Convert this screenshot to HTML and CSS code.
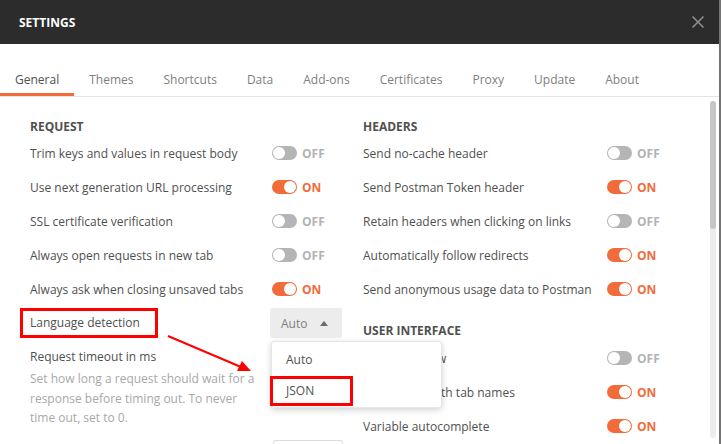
FILE: index.html
```html
<!DOCTYPE html>
<html lang="en">
<head>
<meta charset="utf-8">
<title>Settings</title>
<link rel="stylesheet" href="styles.css">
</head>
<body>
<div class="window">
  <div class="dialog">
    <header class="titlebar">
      <h1 class="title">SETTINGS</h1>
      <button class="close" aria-label="Close">
        <svg width="14" height="14" viewBox="0 0 14 14"><path d="M1.5 1.5 L12.5 12.5 M12.5 1.5 L1.5 12.5" stroke="#8e8e8e" stroke-width="1.6" fill="none"/></svg>
      </button>
    </header>
    <nav class="tabs">
      <span class="tab active">General</span>
      <span class="tab">Themes</span>
      <span class="tab">Shortcuts</span>
      <span class="tab">Data</span>
      <span class="tab">Add-ons</span>
      <span class="tab">Certificates</span>
      <span class="tab">Proxy</span>
      <span class="tab">Update</span>
      <span class="tab">About</span>
    </nav>
    <div class="body">
      <div class="content">
        <section class="col col-left">
          <h2 class="heading">REQUEST</h2>
          <div class="row"><span class="label">Trim keys and values in request body</span><span class="switch"><span class="track"><span class="knob"></span></span><span class="state">OFF</span></span></div>
          <div class="row"><span class="label">Use next generation URL processing</span><span class="switch on"><span class="track"><span class="knob"></span></span><span class="state">ON</span></span></div>
          <div class="row"><span class="label">SSL certificate verification</span><span class="switch"><span class="track"><span class="knob"></span></span><span class="state">OFF</span></span></div>
          <div class="row"><span class="label">Always open requests in new tab</span><span class="switch"><span class="track"><span class="knob"></span></span><span class="state">OFF</span></span></div>
          <div class="row"><span class="label">Always ask when closing unsaved tabs</span><span class="switch on"><span class="track"><span class="knob"></span></span><span class="state">ON</span></span></div>
          <div class="row">
            <span class="label"><span class="mark-box">Language detection</span></span>
            <div class="select-wrap">
              <div class="select"><span>Auto</span><span class="caret"></span></div>
              <ul class="menu">
                <li class="menu-item">Auto</li>
                <li class="menu-item"><span class="mark-item">JSON</span></li>
              </ul>
            </div>
          </div>
          <div class="timeout">
            <div class="timeout-title">Request timeout in ms</div>
            <p class="desc">Set how long a request should wait for a response before timing out. To never time out, set to 0.</p>
            <div class="input-row"><span class="input"></span></div>
          </div>
        </section>
        <section class="col col-right">
          <h2 class="heading">HEADERS</h2>
          <div class="row"><span class="label">Send no-cache header</span><span class="switch"><span class="track"><span class="knob"></span></span><span class="state">OFF</span></span></div>
          <div class="row"><span class="label">Send Postman Token header</span><span class="switch on"><span class="track"><span class="knob"></span></span><span class="state">ON</span></span></div>
          <div class="row"><span class="label">Retain headers when clicking on links</span><span class="switch"><span class="track"><span class="knob"></span></span><span class="state">OFF</span></span></div>
          <div class="row"><span class="label">Automatically follow redirects</span><span class="switch on"><span class="track"><span class="knob"></span></span><span class="state">ON</span></span></div>
          <div class="row"><span class="label">Send anonymous usage data to Postman</span><span class="switch on"><span class="track"><span class="knob"></span></span><span class="state">ON</span></span></div>
          <h2 class="heading heading-spaced">USER INTERFACE</h2>
          <div class="row"><span class="label">Two-pane view</span><span class="switch"><span class="track"><span class="knob"></span></span><span class="state">OFF</span></span></div>
          <div class="row"><span class="label">Show icons with tab names</span><span class="switch on"><span class="track"><span class="knob"></span></span><span class="state">ON</span></span></div>
          <div class="row"><span class="label">Variable autocomplete</span><span class="switch on"><span class="track"><span class="knob"></span></span><span class="state">ON</span></span></div>
        </section>
      </div>
      <div class="scrollbar"><div class="thumb"></div></div>
    </div>
  </div>
  <div class="edge"></div>
  <svg class="arrow" width="721" height="444" viewBox="0 0 721 444">
    <line x1="168" y1="336" x2="241" y2="367" stroke="#ff0000" stroke-width="2"/>
    <polygon points="251,371 237,371 242,361" fill="#ff0000"/>
  </svg>
</div>
</body>
</html>
```
FILE: styles.css
```css
* { box-sizing: border-box; }
html, body { margin: 0; padding: 0; }
body {
  font-family: "Open Sans", "Liberation Sans", sans-serif;
  font-size: 12px;
  color: #505050;
  background: #fff;
}
.window {
  position: relative;
  display: flex;
  width: 721px;
  height: 444px;
  overflow: hidden;
}
.dialog {
  flex: 1;
  display: flex;
  flex-direction: column;
  min-width: 0;
}
.edge {
  width: 2px;
  background: #747474;
}
.titlebar {
  height: 44px;
  background: #2c2c2c;
  display: flex;
  align-items: center;
  justify-content: space-between;
  padding: 0 14px 0 19px;
  flex-shrink: 0;
}
.title {
  margin: 0;
  font-size: 12px;
  font-weight: 700;
  color: #ffffff;
  letter-spacing: 0;
}
.close {
  border: 0;
  background: none;
  padding: 0;
  width: 14px;
  height: 14px;
  display: flex;
}
.tabs {
  height: 53px;
  display: flex;
  align-items: flex-end;
  border-bottom: 1px solid #e4e4e4;
  flex-shrink: 0;
}
.tab {
  padding: 6px 15px 0;
  height: 31px;
  line-height: 18px;
  color: #808080;
  border-bottom: 3px solid transparent;
  white-space: nowrap;
}
.tab.active {
  color: #505050;
  border-bottom-color: #f26b3a;
}
.body {
  flex: 1;
  display: flex;
  min-height: 0;
}
.content {
  flex: 1;
  display: grid;
  grid-template-columns: 313px 1fr;
  column-gap: 20px;
  padding: 20px 0 0 30px;
}
.col { min-width: 0; }
.col-left { --label-w: 242px; }
.col-right { --label-w: 244px; }
.heading {
  margin: 0;
  font-size: 12px;
  font-weight: 700;
  line-height: 20px;
  color: #505050;
}
.heading-spaced { margin-top: 15px; }
.row {
  display: grid;
  grid-template-columns: var(--label-w) auto;
  align-items: center;
  height: 34px;
}
.row:first-of-type { margin-top: -1px; }
.label {
  white-space: nowrap;
  color: #505050;
}
.switch {
  display: flex;
  align-items: center;
  gap: 5px;
}
.track {
  width: 25px;
  height: 14px;
  border-radius: 7px;
  background: #b5b5b5;
  padding: 1px;
  display: flex;
  justify-content: flex-start;
}
.knob {
  width: 12px;
  height: 12px;
  border-radius: 50%;
  background: #ffffff;
}
.state {
  font-weight: 700;
  color: #b3b3b3;
}
.switch.on .track {
  background: #f26b3a;
  justify-content: flex-end;
}
.switch.on .state { color: #f26b3a; }
.mark-box {
  display: inline-block;
  width: 138px;
  height: 30px;
  line-height: 24px;
  margin-left: -10px;
  padding-left: 7px;
  border: 3px solid #ff0000;
}
.select-wrap {
  position: relative;
  margin-left: -2px;
}
.select {
  width: 72px;
  height: 30px;
  background: #ececec;
  border-radius: 2px;
  display: flex;
  align-items: center;
  justify-content: space-between;
  padding: 0 14px 0 11px;
  color: #808080;
}
.caret {
  width: 0;
  height: 0;
  border-left: 4px solid transparent;
  border-right: 4px solid transparent;
  border-bottom: 5px solid #6a6a6a;
}
.menu {
  position: absolute;
  top: 33px;
  left: 1px;
  width: 171px;
  height: 67px;
  margin: 0;
  padding: 3px 0 0;
  list-style: none;
  background: #fff;
  border: 1px solid #e6e6e6;
  border-radius: 3px;
  box-shadow: 0 2px 6px rgba(0,0,0,0.18);
  z-index: 2;
}
.menu-item {
  height: 31px;
  line-height: 29px;
  padding-left: 14px;
  color: #505050;
}
.mark-item {
  display: inline-block;
  width: 83px;
  height: 30px;
  line-height: 24px;
  margin-left: -16px;
  padding-left: 13px;
  border: 3px solid #ff0000;
}
.timeout { padding-top: 7px; }
.timeout-title {
  line-height: 20px;
  color: #505050;
}
.desc {
  margin: 2px 0 0;
  width: 228px;
  line-height: 19.5px;
  color: #a8a8a8;
}
.input-row {
  margin-top: 12px;
  padding-left: 243px;
}
.input {
  display: block;
  width: 70px;
  height: 30px;
  border: 1px solid #dcdcdc;
  border-radius: 3px;
}
.scrollbar {
  width: 6px;
  margin: 4px 3px 6px 0;
  background: #ececec;
  border-radius: 3px;
  display: flex;
  flex-direction: column;
}
.thumb {
  height: 128px;
  background: #c6c6c6;
  border-radius: 3px;
}
.arrow {
  position: absolute;
  top: 0;
  left: 0;
  pointer-events: none;
  z-index: 3;
}
```
